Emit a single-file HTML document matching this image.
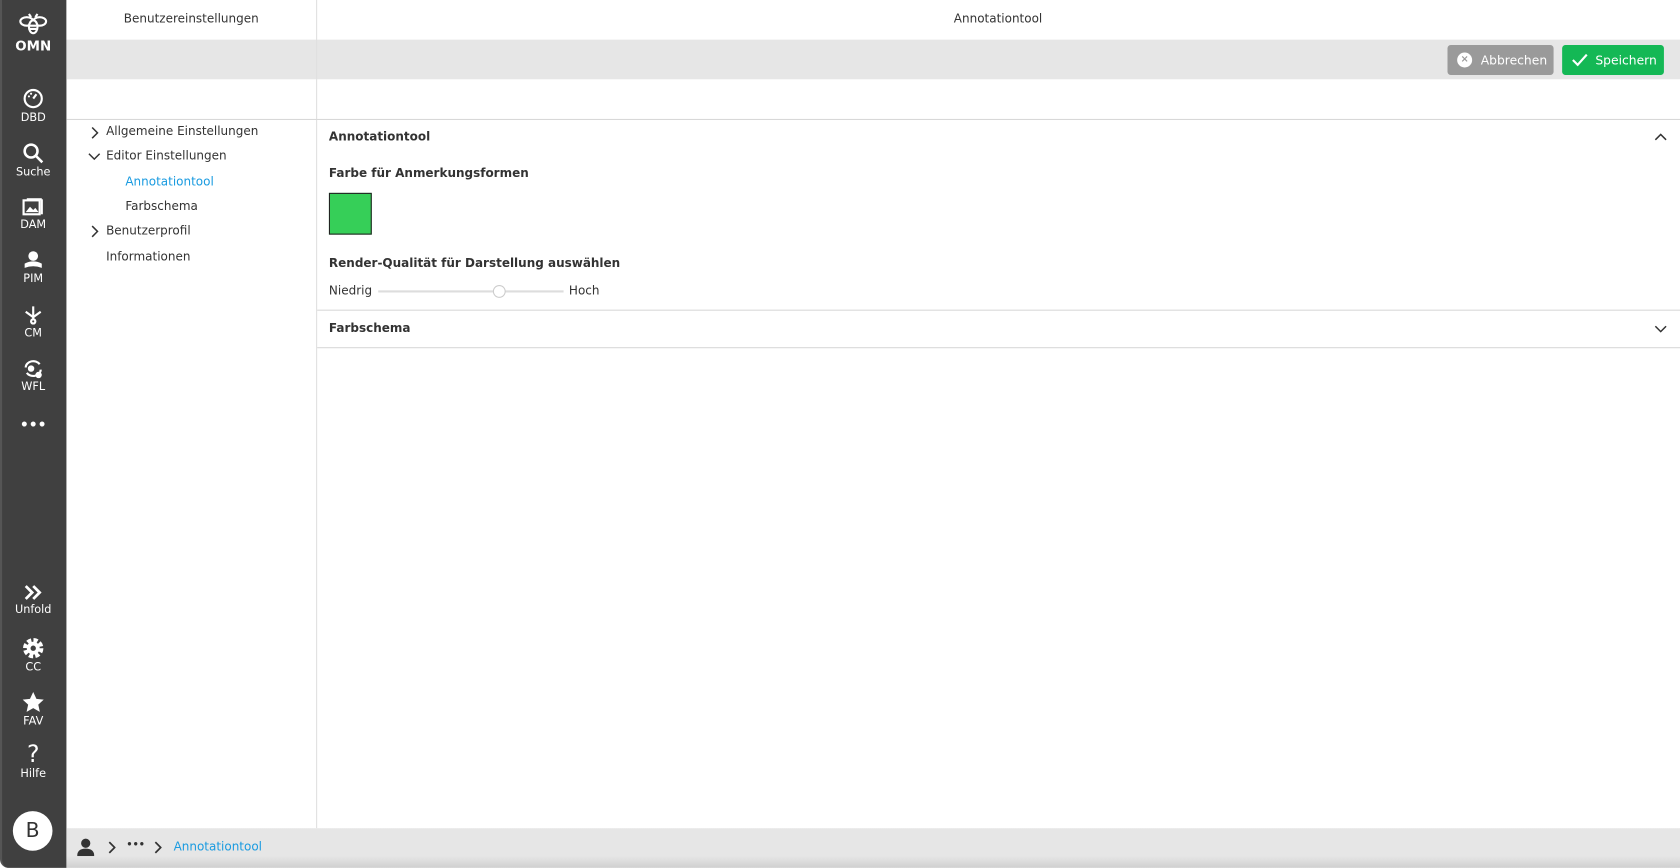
<!DOCTYPE html>
<html><head><meta charset="utf-8"><style>
*{box-sizing:border-box;margin:0;padding:0}
html,body{width:1680px;height:868px;overflow:hidden;background:#fff;font-family:"DejaVu Sans","Liberation Sans",sans-serif;color:#333}
#w{position:absolute;left:0;top:0;width:1568px;height:810px;transform:scale(1.071429);transform-origin:0 0}
.a{position:absolute}
.sb{left:0;top:0;width:62px;height:810px;background:#404040;border-left:2px solid #555;border-radius:0 0 0 8px}
.it{position:absolute;left:-2px;width:62px;text-align:center;color:#fff;font-size:10.5px}
.it svg{display:block;margin:0 auto 2px}
.t{font-size:11.2px;color:#333}
</style></head><body><div id="w">
<div class="a sb">
 <div class="it" style="top:10px"><svg width="30" height="24" viewBox="0 0 30 24" fill="none" stroke="#fff" stroke-width="2"><ellipse cx="9" cy="10" rx="6" ry="4"/><ellipse cx="21" cy="10" rx="6" ry="4"/><ellipse cx="15" cy="15" rx="4" ry="6" fill="#404040"/><path d="M12 14h6M12 17h6M11 3l2 3M19 3l-2 3"/></svg><div style="font-size:12.5px;font-weight:bold;margin-top:-1px">OMN</div></div>
 <div class="it" style="top:82px"><svg width="20" height="20" viewBox="0 0 20 20"><circle cx="10" cy="10" r="8" fill="none" stroke="#fff" stroke-width="2"/><path d="M10 10l3-4" stroke="#fff" stroke-width="2"/><circle cx="6" cy="8" r="1" fill="#fff"/><circle cx="8" cy="5.5" r="1" fill="#fff"/></svg>DBD</div>
 <div class="it" style="top:133px"><svg width="20" height="20" viewBox="0 0 20 20" fill="none" stroke="#fff" stroke-width="2.4"><circle cx="8" cy="8" r="6"/><path d="M12.5 12.5l6 6"/></svg>Suche</div>
 <div class="it" style="top:184px"><svg width="20" height="18" viewBox="0 0 20 18"><rect x="1" y="3" width="15" height="13" fill="none" stroke="#fff" stroke-width="2"/><path d="M3 14l4-5 3 3 2-2 3 4z" fill="#fff"/><rect x="17" y="2" width="2" height="14" fill="#fff"/><rect x="4" y="1" width="14" height="2" fill="#fff"/></svg>DAM</div>
 <div class="it" style="top:234px"><svg width="20" height="18" viewBox="0 0 20 18" fill="#fff"><circle cx="10" cy="5" r="4.5"/><path d="M2 12q8-4 16 0v4q-8-3-16 0z"/></svg>PIM</div>
 <div class="it" style="top:285px"><svg width="20" height="18" viewBox="0 0 20 18" fill="none" stroke="#fff" stroke-width="2"><path d="M10 1v12M3 6l7 5 7-5"/><circle cx="10" cy="15" r="2"/></svg>CM</div>
 <div class="it" style="top:335px"><svg width="20" height="18" viewBox="0 0 20 18" fill="none" stroke="#fff" stroke-width="2"><path d="M3 8a7 6 0 0 1 13-3M17 10a7 6 0 0 1-13 3"/><circle cx="8" cy="9" r="2" fill="#fff"/><circle cx="15" cy="15" r="2" fill="#fff"/></svg>WFL</div>
 <div class="it" style="top:390px;font-size:13px;font-weight:bold;letter-spacing:0">•••</div>
 <div class="it" style="top:545px"><svg width="20" height="16" viewBox="0 0 20 16" fill="none" stroke="#fff" stroke-width="2.6"><path d="M3 2l6 6-6 6M10 2l6 6-6 6"/></svg>Unfold</div>
 <div class="it" style="top:595px"><svg width="20" height="20" viewBox="0 0 20 20"><circle cx="10" cy="10" r="7" fill="none" stroke="#fff" stroke-width="5" stroke-dasharray="3.6 1.9"/><circle cx="10" cy="10" r="6" fill="#fff"/><circle cx="10" cy="10" r="2.5" fill="#404040"/></svg>CC</div>
 <div class="it" style="top:645px"><svg width="22" height="20" viewBox="0 0 24 22"><path d="M12 1l3.3 7 7.5.8-5.6 5.1 1.6 7.4L12 17.5 5.2 21.3l1.6-7.4L1.2 8.8 8.7 8z" fill="#fff"/></svg>FAV</div>
 <div class="it" style="top:694px"><div style="font-size:22px;line-height:22px">?</div>Hilfe</div>
 <div class="a" style="left:10px;top:757px;width:37px;height:37px;border-radius:50%;background:#fff;color:#333;font-size:19px;line-height:37px;text-align:center">B</div>
</div>
<div class="a" style="left:62px;top:0;width:1506px;height:37px;background:#fff"></div>
<div class="a t" style="left:62px;top:11px;width:233px;text-align:center">Benutzereinstellungen</div>
<div class="a t" style="left:295px;top:11px;width:1273px;text-align:center">Annotationtool</div>
<div class="a" style="left:62px;top:37px;width:1506px;height:37px;background:#e6e6e6"></div>
<div class="a" style="left:295px;top:0;width:1px;height:773px;background:#e0e0e0"></div>
<div class="a" style="left:62px;top:111px;width:1506px;height:1px;background:#d8d8d8"></div>
<div class="a" style="left:1351px;top:42px;width:99px;height:28px;background:#9a9a9a;border-radius:3px;color:#fff;font-size:11.5px;line-height:28px;padding-left:31px">Abbrechen<div class="a" style="left:9px;top:7px;width:14px;height:14px;border-radius:50%;background:#fff;color:#999;font-size:9px;line-height:14px;text-align:center;font-weight:bold">×</div></div>
<div class="a" style="left:1458px;top:42px;width:95px;height:28px;background:#14b855;border-radius:3px;color:#fff;font-size:11.5px;line-height:28px;padding-left:31px">Speichern<svg class="a" style="left:9px;top:8px" width="15" height="12" viewBox="0 0 15 12" fill="none" stroke="#fff" stroke-width="2"><path d="M1 6l4.5 4.5L14 1"/></svg></div>
<svg class="a" style="left:84px;top:118px" width="8" height="12" viewBox="0 0 8 12" fill="none" stroke="#333" stroke-width="1.4"><path d="M2 1l5 5-5 5"/></svg>
<div class="a t" style="left:99px;top:116px">Allgemeine Einstellungen</div>
<svg class="a" style="left:82px;top:142px" width="12" height="8" viewBox="0 0 12 8" fill="none" stroke="#333" stroke-width="1.4"><path d="M1 1.5l5 5 5-5"/></svg>
<div class="a t" style="left:99px;top:139px">Editor Einstellungen</div>
<div class="a t" style="left:117px;top:163px;color:#1a9be0">Annotationtool</div>
<div class="a t" style="left:117px;top:186px">Farbschema</div>
<svg class="a" style="left:84px;top:210px" width="8" height="12" viewBox="0 0 8 12" fill="none" stroke="#333" stroke-width="1.4"><path d="M2 1l5 5-5 5"/></svg>
<div class="a t" style="left:99px;top:209px">Benutzerprofil</div>
<div class="a t" style="left:99px;top:233px">Informationen</div>
<div class="a t" style="left:307px;top:121px;font-weight:bold">Annotationtool</div>
<svg class="a" style="left:1544px;top:124px" width="12" height="8" viewBox="0 0 12 8" fill="none" stroke="#333" stroke-width="1.4"><path d="M1 6.5l5-5 5 5"/></svg>
<div class="a t" style="left:307px;top:155px;font-weight:bold">Farbe für Anmerkungsformen</div>
<div class="a" style="left:307px;top:180px;width:40px;height:39px;background:#36cf58;border:1px solid #222"></div>
<div class="a t" style="left:307px;top:239px;font-weight:bold">Render-Qualität für Darstellung auswählen</div>
<div class="a t" style="left:307px;top:265px">Niedrig</div>
<div class="a" style="left:353px;top:271px;width:173px;height:2px;background:#ddd"></div>
<div class="a" style="left:460px;top:266px;width:12px;height:12px;border-radius:50%;background:#fff;border:1px solid #ccc"></div>
<div class="a t" style="left:531px;top:265px">Hoch</div>
<div class="a" style="left:296px;top:289px;width:1272px;height:1px;background:#d8d8d8"></div>
<div class="a t" style="left:307px;top:300px;font-weight:bold">Farbschema</div>
<svg class="a" style="left:1544px;top:303px" width="12" height="8" viewBox="0 0 12 8" fill="none" stroke="#333" stroke-width="1.4"><path d="M1 1.5l5 5 5-5"/></svg>
<div class="a" style="left:296px;top:324px;width:1272px;height:1px;background:#d8d8d8"></div>
<div class="a" style="left:62px;top:773px;width:1506px;height:37px;background:linear-gradient(to bottom,#e6e6e6 0,#e6e6e6 70%,#d0d0d0 100%)"></div>
<svg class="a" style="left:72px;top:782px" width="16" height="17" viewBox="0 0 16 17" fill="#333"><circle cx="8" cy="5" r="4.3"/><path d="M0 17q0-7 8-7t8 7z"/></svg>
<svg class="a" style="left:100px;top:785px" width="8" height="12" viewBox="0 0 8 12" fill="none" stroke="#333" stroke-width="1.6"><path d="M2 1l5 5-5 5"/></svg>
<div class="a" style="left:118px;top:784px;font-size:9px;font-weight:bold;color:#333">•••</div>
<svg class="a" style="left:143px;top:785px" width="8" height="12" viewBox="0 0 8 12" fill="none" stroke="#333" stroke-width="1.6"><path d="M2 1l5 5-5 5"/></svg>
<div class="a t" style="left:162px;top:784px;color:#1a9be0">Annotationtool</div>
</div></body></html>
